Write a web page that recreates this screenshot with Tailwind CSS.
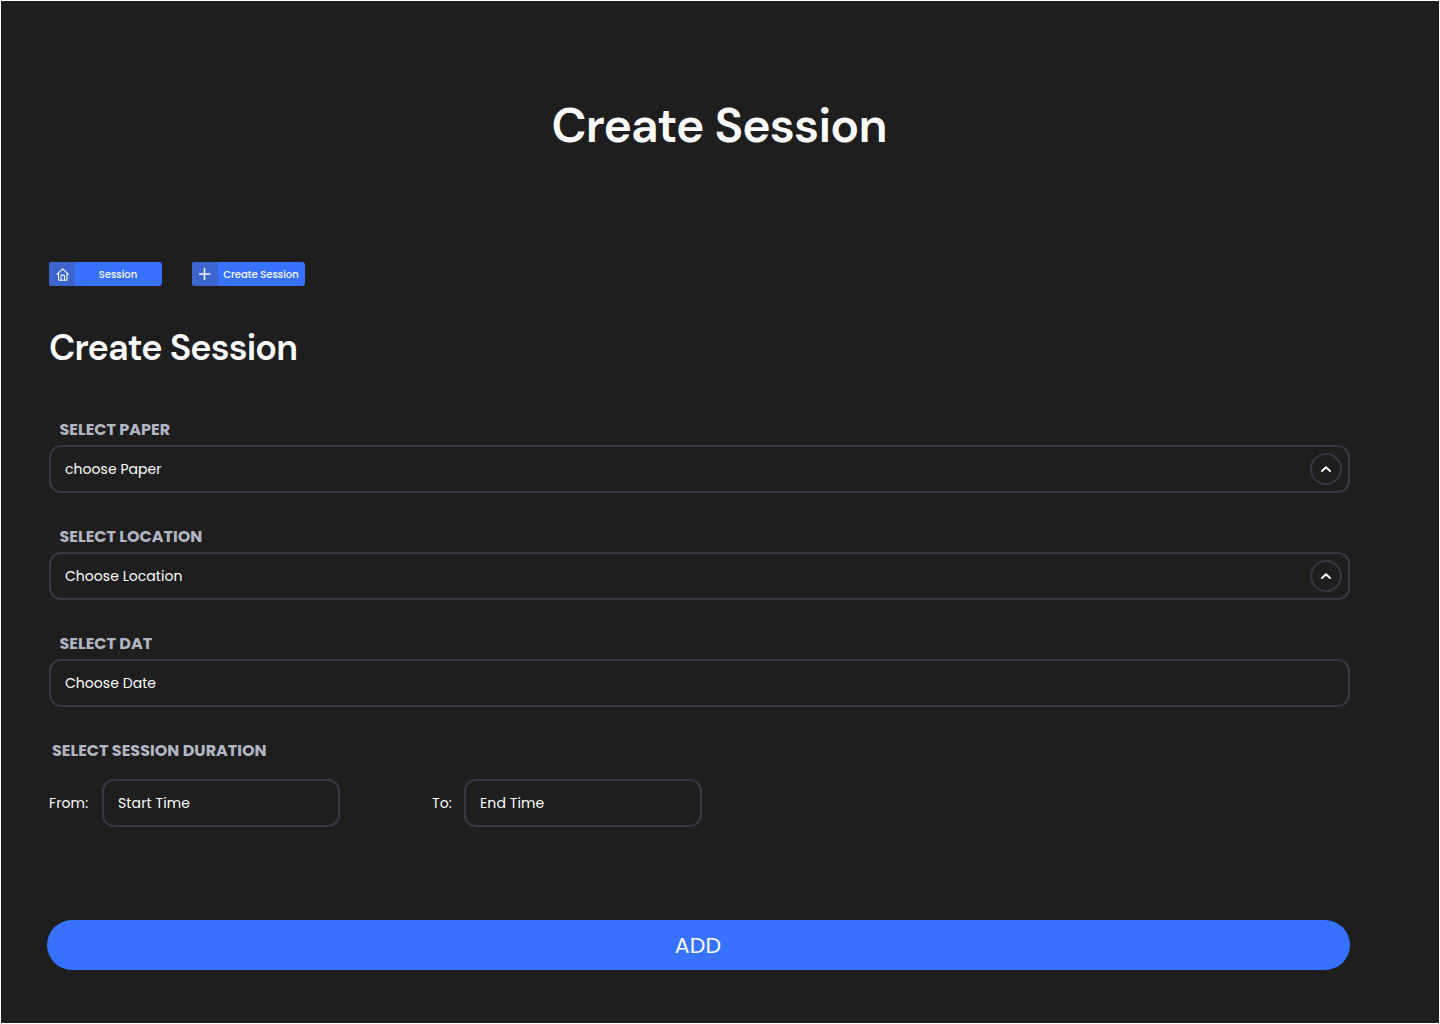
<!DOCTYPE html>
<html lang="en">
<head>
<meta charset="utf-8">
<title>Create Session</title>
<script src="https://cdn.jsdelivr.net/npm/@tailwindcss/browser@4"></script>
</head>
<body class="h-[1024px] w-[1440px] overflow-hidden border border-white bg-[#1e1e1e] font-['Poppins','Inter',sans-serif] text-[#fcfcfd] antialiased">
<main class="flex flex-col pl-12">
  <h1 class="mt-[93px] w-[1340px] text-center font-['DM_Sans','Inter',sans-serif] text-[48px] leading-[64px] font-semibold tracking-[-0.84px]"><span>Create Session</span></h1>

  <nav class="mt-[104px] flex h-6 gap-[30px] text-[10px] leading-[25px] font-medium">
    <a class="flex w-[113px] overflow-hidden rounded-[3px] bg-[#3772ff]">
      <span class="flex w-[26px] items-center justify-center bg-[#3c66cd]">
        <svg class="ml-px size-[14px]" viewBox="0 0 14 14" fill="none" stroke="currentColor" stroke-width="1.1" stroke-linecap="round" stroke-linejoin="round"><path d="M1 7.4 6.7 1.8l5.7 5.6M2.5 6.4v5.8c0 .6.4 1 1 1h6.5c.6 0 1-.4 1-1V6.4M5 13V8.9c0-.5.3-.8.8-.8h1.9c.5 0 .8.3.8.8V13"/></svg>
      </span>
      <span class="flex-1 pr-px text-center"><span>Session</span></span>
    </a>
    <a class="flex w-[113px] overflow-hidden rounded-[3px] bg-[#3772ff]">
      <span class="flex w-[26px] items-center justify-center bg-[#3c66cd]">
        <svg class="mr-px size-3" viewBox="0 0 12 12" fill="none" stroke="currentColor" stroke-width="1.5" stroke-linecap="round"><path d="M5.5 .8v10.6M.3 6.1h10.6"/></svg>
      </span>
      <span class="flex-1 pr-px text-center whitespace-nowrap"><span>Create Session</span></span>
    </a>
  </nav>

  <h2 class="mt-[38px] font-['DM_Sans','Inter',sans-serif] text-[36px] leading-12 font-semibold tracking-[-0.86px]"><span>Create Session</span></h2>

  <form class="flex w-[1301px] flex-col text-sm tracking-[0.04px]">
    <label class="mt-[46px] ml-[10.5px] text-base leading-6 font-bold tracking-normal text-[#b1b5c4]"><span>SELECT PAPER</span></label>
    <div class="mt-[3px] flex h-12 items-center justify-between rounded-xl border-2 border-[#353945] pr-1.5 pl-3.5">
      <span>choose Paper</span>
      <span class="flex size-8 items-center justify-center rounded-full border-2 border-[#353945]"><svg class="h-[7px] w-3" viewBox="0 0 12 7" fill="none" stroke="#fcfcfd" stroke-width="2" stroke-linecap="round" stroke-linejoin="round"><path d="m2 5 4-3.7L10 5"/></svg></span>
    </div>
    <label class="mt-8 ml-[10.5px] text-base leading-6 font-bold tracking-normal text-[#b1b5c4]"><span>SELECT LOCATION</span></label>
    <div class="mt-[3px] flex h-12 items-center justify-between rounded-xl border-2 border-[#353945] pr-1.5 pl-3.5">
      <span>Choose Location</span>
      <span class="flex size-8 items-center justify-center rounded-full border-2 border-[#353945]"><svg class="h-[7px] w-3" viewBox="0 0 12 7" fill="none" stroke="#fcfcfd" stroke-width="2" stroke-linecap="round" stroke-linejoin="round"><path d="m2 5 4-3.7L10 5"/></svg></span>
    </div>
    <label class="mt-8 ml-[10.5px] text-base leading-6 font-bold tracking-normal text-[#b1b5c4]"><span>SELECT DAT</span></label>
    <div class="mt-[3px] flex h-12 items-center rounded-xl border-2 border-[#353945] pl-3.5"><span>Choose Date</span></div>
    <label class="mt-8 ml-[3px] text-base leading-6 font-bold tracking-normal text-[#b1b5c4]"><span>SELECT SESSION DURATION</span></label>
    <div class="mt-4 flex h-12 items-center tracking-[0.12px]">
      <div class="w-[53px]"><span>From:</span></div>
      <div class="flex h-12 w-[238px] items-center rounded-xl border-2 border-[#353945] pl-3.5"><span>Start Time</span></div>
      <div class="ml-[92px] w-8"><span>To:</span></div>
      <div class="flex h-12 w-[238px] items-center rounded-xl border-2 border-[#353945] pl-3.5"><span>End Time</span></div>
    </div>
    <button type="button" class="mt-[93px] -ml-0.5 h-[50px] w-[1303px] rounded-full bg-[#3772ff] pt-px pr-px text-[22px] tracking-[0.2px]"><span>ADD</span></button>
  </form>
</main>
</body>
</html>
